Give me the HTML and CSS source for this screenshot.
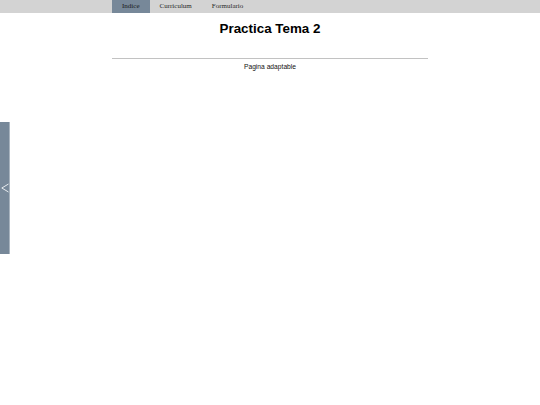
FILE: index.html
```html
<!DOCTYPE html>
<html lang="es">
<head>
<meta charset="utf-8">
<title>Practica Tema 2</title>
<link rel="stylesheet" href="styles.css">
</head>
<body>
<nav class="topbar">
  <ul class="menu">
    <li><a class="menu-link active" href="#">Indice</a></li>
    <li><a class="menu-link" href="#">Curriculum</a></li>
    <li><a class="menu-link" href="#">Formulario</a></li>
  </ul>
</nav>
<main class="page">
  <h1 class="title">Practica Tema 2</h1>
  <hr class="rule">
  <p class="subtitle">Pagina adaptable</p>
</main>
<aside class="side-tab">
  <svg class="side-arrow" width="8" height="10" viewBox="0 0 8 10"><polyline points="7.5,1 0.8,5 7.5,9" fill="none" stroke="#f4f6f8" stroke-width="0.9"/></svg>
</aside>
</body>
</html>
```

FILE: styles.css
```css
html, body {
  margin: 0;
  padding: 0;
  background: #ffffff;
}
body {
  font-family: "Liberation Sans", Arial, sans-serif;
  color: #000;
}
.topbar {
  background: #d3d3d3;
  height: 13px;
}
.menu {
  list-style: none;
  margin: 0 auto;
  padding: 0;
  width: 316px;
  display: flex;
  height: 13px;
}
.menu-link {
  display: block;
  height: 13px;
  line-height: 12px;
  padding: 0 10px;
  font-family: "Liberation Serif", "Times New Roman", serif;
  font-size: 7px;
  color: #2a2a2a;
  text-decoration: none;
}
.menu-link.active {
  background: #778899;
  color: #1a1a1a;
}
.page {
  width: 316px;
  margin: 0 auto;
  display: flex;
  flex-direction: column;
  align-items: stretch;
}
.title {
  margin: 8px 0 0;
  font-size: 13.4px;
  line-height: 16px;
  font-weight: bold;
  text-align: center;
}
.rule {
  margin: 21px 0 0;
  border: none;
  border-top: 1px solid #c2c2c2;
  height: 0;
}
.subtitle {
  margin: 3px 0 0;
  font-size: 6.7px;
  line-height: 9px;
  text-align: center;
  color: #111;
}
.side-tab {
  position: fixed;
  left: 0;
  top: 122px;
  width: 10px;
  height: 132px;
  background: #778899;
  border-right: 1px solid #a9b4bf;
  box-sizing: border-box;
  display: flex;
  align-items: center;
  justify-content: center;
}
.side-arrow {
  display: block;
  margin-left: 1px;
}
```
